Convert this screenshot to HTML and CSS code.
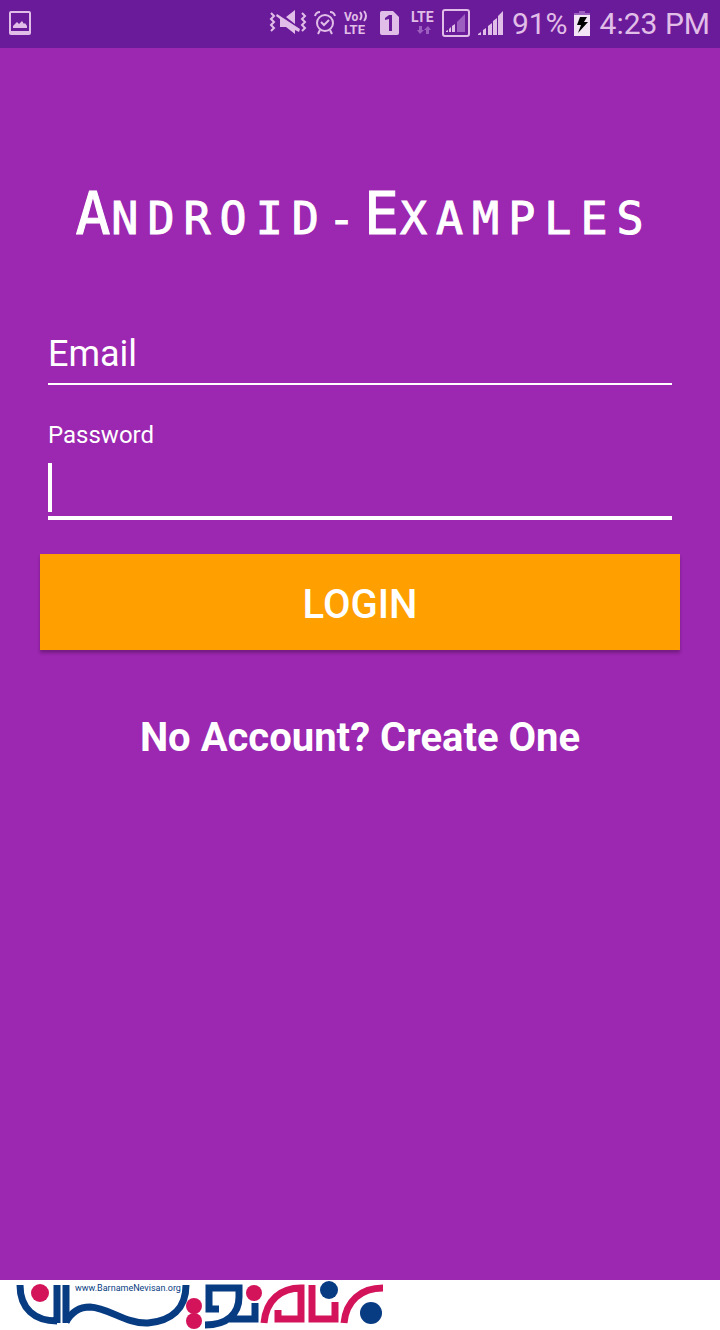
FILE: index.html
```
<!DOCTYPE html>
<html lang="en">
<head>
    <meta charset="UTF-8">
    <meta name="viewport" content="width=device-width, initial-scale=1.0">
    <title>Login - Android-Examples</title>
    <link rel="stylesheet" href="styles.css">
</head>
<body>
    <header class="status-bar">
        <svg class="icon" width="22" height="24" viewBox="0 0 22 24" aria-label="Screenshot">
            <path fill-rule="evenodd" d="M2 0H20Q22 0 22 2V22Q22 24 20 24H2Q0 24 0 22V2Q0 0 2 0ZM2 2V20H20V2Z"/>
            <path d="M4 17V15L8 11L10 13L13 10L15 13L16 12L18 15V17Z"/>
        </svg>
        <div class="status-right">
            <svg class="icon" width="38" height="26" viewBox="0 0 38 26" aria-label="Vibrate">
                <path class="line" d="M2 3L5 6L2 9L5 12L2 15L5 18L2 21M33 3L36 6L33 9L36 12L33 15L36 18L33 21"/>
                <path d="M8 4L31 19L30 22L26 20V24L17 17H11V9L7 6ZM17 7L26 0V14Z"/>
            </svg>
            <svg class="icon alarm" width="22" height="26" viewBox="0 0 22 26" aria-label="Alarm">
                <circle class="line" cx="11" cy="13" r="8"/>
                <path class="line" d="M7 12L10 15L15 10M1 6Q2 2 6 2M16 2Q20 2 21 6M6 20L4 24M16 20L18 24"/>
            </svg>
            <svg class="icon volte" width="26" height="28" viewBox="0 0 26 28" aria-label="VoLTE">
                <text class="mark" x="0" y="12" font-size="12">Vo</text>
                <path class="line" d="M16 3Q19 7 16 11M20 2Q24 7 20 12"/>
                <text class="mark" x="0" y="25" font-size="13">LTE</text>
            </svg>
            <svg class="icon sim" width="19" height="24" viewBox="0 0 19 24" aria-label="SIM 1">
                <path d="M2 0H13L19 6V22Q19 24 17 24H2Q0 24 0 22V2Q0 0 2 0Z"/>
                <path class="cut" d="M5 7L9 4H12V20H9V8L5 9Z"/>
            </svg>
            <svg class="icon lte" width="27" height="28" viewBox="0 0 27 28" aria-label="LTE data">
                <text class="mark" x="0" y="13" font-size="14">LTE</text>
                <path class="dim" d="M8 17H11V21H13L9 25L6 21H8ZM15 25V21H13L17 17L20 21H18V25Z"/>
            </svg>
            <svg class="icon boxed" width="28" height="28" viewBox="0 0 28 28" aria-label="Signal SIM 1">
                <rect class="line" x="1" y="1" width="26" height="26" rx="2"/>
                <path class="dim" d="M15 13L23 5V23H15Z"/>
                <path d="M4 23V22L6 21V23ZM7 23V20L9 18V23ZM10 23V17L13 15V23Z"/>
            </svg>
            <svg class="icon signal" width="26" height="26" viewBox="0 0 26 26" aria-label="Signal SIM 2">
                <path d="M0 25V24L3 22V25ZM5 25V20L8 18V25ZM10 25V16L14 13V25ZM15 25V11L19 8V25ZM20 25V6L25 1V25Z"/>
            </svg>
            <span class="battery-level">91%</span>
            <svg class="icon battery" width="16" height="25" viewBox="0 0 16 25" aria-label="Charging">
                <path class="dim" d="M5 0H11V2H16V7H0V2H5Z"/>
                <path class="charge" d="M0 4H16V25H0Z"/>
                <path class="bolt" d="M6 6H13L10 11H14L4 22L7 14H3Z"/>
            </svg>
            <time class="clock">4:23 PM</time>
        </div>
    </header>

    <main class="login">
        <h1 class="brand"><span class="cap">A</span>NDROID-<span class="cap">E</span>XAMPLES</h1>

        <form class="login-form">
            <input class="email" type="email" placeholder="Email" aria-label="Email">
            <div class="field">
                <label for="password">Password</label>
                <div class="password-box">
                    <input class="password" type="password" id="password">
                </div>
            </div>
            <button class="login-btn" type="button">LOGIN</button>
        </form>

        <a class="signup" href="#">No Account? Create One</a>
    </main>

    <footer class="site-footer">
        <svg width="400" height="50" viewBox="0 0 400 50" role="img" aria-label="BarnameNevisan">
            <g class="navy-line">
                <path d="M20 5C20 29 35 41 57 41M57 5V43M66 5V43"/>
                <path d="M66 42C72 31 80 27 90 27C109 28 126 44 148 43C171 41 186 29 186 5"/>
                <path d="M219 29H209V8H239V17C239 34 227 45 205 45M228 39H255V23"/>
            </g>
            <g class="red-line">
                <path d="M264 43C266 20 281 8 301 8V39H278V30"/>
                <path d="M312 5V39H335V22M344 43C346 21 361 8 383 8"/>
            </g>
            <g class="red-dot">
                <circle cx="40" cy="13" r="9"/>
                <circle cx="194" cy="26" r="8"/>
                <circle cx="194" cy="41" r="8"/>
                <circle cx="254" cy="13" r="8"/>
            </g>
            <g class="navy-dot">
                <circle cx="329" cy="10" r="9"/>
                <circle cx="371" cy="33" r="11"/>
            </g>
            <text class="site-url" x="75" y="11">www.BarnameNevisan.org</text>
        </svg>
    </footer>
</body>
</html>
```
FILE: styles.css
```
* {
    box-sizing: border-box;
}
body {
    font-family: Roboto, sans-serif;
    background: #9c27b0;
    margin: 0;
    min-height: 100vh;
    display: flex;
    flex-direction: column;
    color: white;
}
.status-bar {
    display: flex;
    align-items: center;
    justify-content: space-between;
    height: 48px;
    padding: 0 10px 2px 9px;
    background: #6a1b9a;
    color: #e1bee7;
    font-size: 30px;
}
.status-right {
    display: flex;
    align-items: center;
}
.icon {
    fill: #e1bee7;
    flex: none;
    overflow: visible;
}
.icon .line {
    fill: none;
    stroke: #e1bee7;
    stroke-width: 2;
}
.icon .dim {
    fill: #9c5fc0;
}
.icon .cut {
    fill: #6a1b9a;
}
.icon .charge {
    fill: #f3e5f5;
}
.icon .bolt {
    fill: black;
}
.mark {
    font-weight: 700;
}
.alarm {
    margin-left: 7px;
}
.volte {
    margin-left: 8px;
}
.sim {
    margin-left: 10px;
}
.lte {
    margin-left: 12px;
}
.boxed {
    margin-left: 4px;
}
.signal {
    margin-left: 8px;
}
.battery-level {
    margin-left: 8px;
}
.battery {
    margin: 0 10px 0 6px;
}
.login {
    flex: 1;
    display: flex;
    flex-direction: column;
    padding: 126px 40px 0;
}
.brand {
    margin: 0;
    padding-left: 8px;
    font-family: "DejaVu Sans Mono", monospace;
    font-size: 45px;
    font-weight: 400;
    line-height: 80px;
    letter-spacing: 9px;
    text-align: center;
    white-space: nowrap;
    -webkit-text-stroke: 1px white;
}
.cap {
    font-size: 58px;
    letter-spacing: 1px;
}
.login-form {
    display: flex;
    flex-direction: column;
    margin-top: 65px;
}
.login-form input {
    width: 100%;
    border: none;
    border-radius: 0;
    padding: 0;
    background: transparent;
    color: white;
    font-family: inherit;
    font-size: 36px;
    outline: none;
    caret-color: transparent;
}
.login-form input::placeholder {
    color: white;
    opacity: 1;
}
.login-form .email {
    width: auto;
    height: 61px;
    margin: 0 8px;
    border-bottom: 2px solid white;
}
.field {
    margin: 36px 8px 0;
}
.field label {
    display: block;
    font-size: 24px;
    line-height: 28px;
}
.password-box {
    position: relative;
    margin-top: 10px;
}
.login-form .password {
    display: block;
    height: 61px;
    border-bottom: 4px solid white;
}
/* text cursor */
.password-box::before {
    content: "";
    position: absolute;
    left: 0;
    top: 4px;
    width: 4px;
    height: 49px;
    background: white;
}
.login-btn {
    height: 96px;
    margin-top: 34px;
    padding: 4px 0 0;
    border: none;
    background: #ffa000;
    color: white;
    font-family: inherit;
    font-size: 40px;
    font-weight: 500;
    box-shadow: 0 3px 3px rgba(0, 0, 0, 0.25);
    cursor: pointer;
}
.signup {
    margin-top: 64px;
    color: white;
    font-size: 40px;
    font-weight: 700;
    line-height: 48px;
    text-align: center;
    text-decoration: none;
}
.site-footer {
    height: 50px;
    background: white;
}
.site-footer svg {
    display: block;
}
.navy-line,
.red-line {
    fill: none;
    stroke: #073b82;
    stroke-width: 7;
}
.red-line {
    stroke: #d4145a;
}
.navy-dot {
    fill: #073b82;
}
.red-dot {
    fill: #d4145a;
}
.site-url {
    fill: #073b82;
    font-size: 9px;
}
```
